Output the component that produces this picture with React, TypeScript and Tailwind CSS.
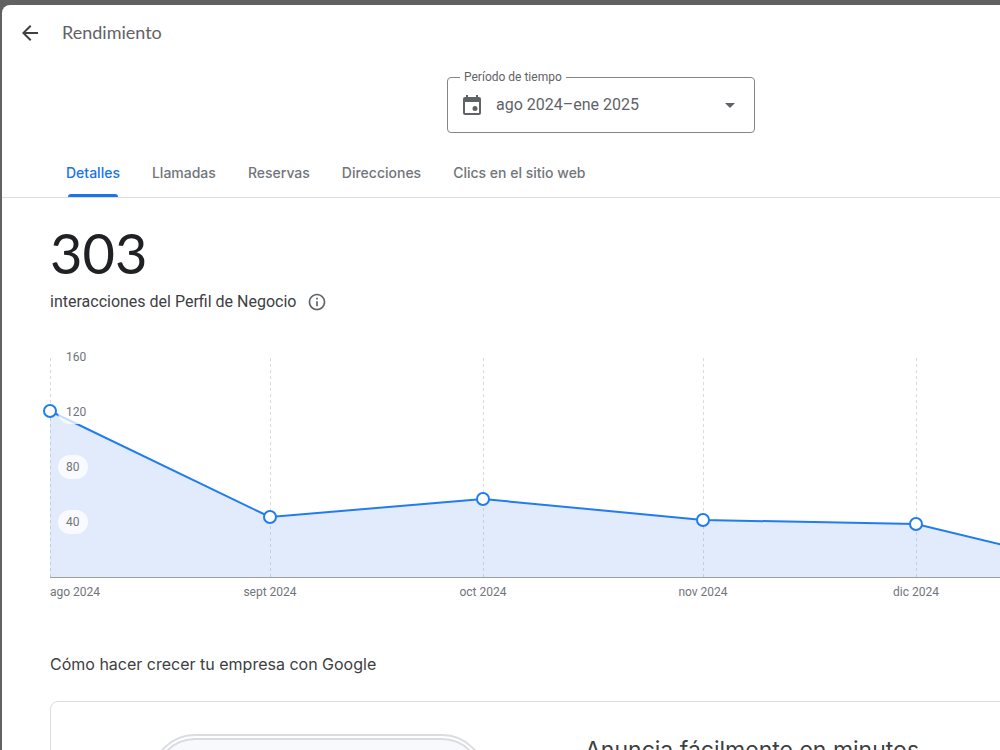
import { useState } from "react";
import { MdArrowBack, MdArrowDropDown, MdInfoOutline } from "react-icons/md";

const tabs = ["Detalles", "Llamadas", "Reservas", "Direcciones", "Clics en el sitio web"];

const points = [
  { label: "ago 2024", day: 0, value: 121 },
  { label: "sept 2024", day: 31, value: 44 },
  { label: "oct 2024", day: 61, value: 57 },
  { label: "nov 2024", day: 92, value: 42 },
  { label: "dic 2024", day: 122, value: 39 },
  { label: "ene 2025", day: 153, value: 0 },
];

const ticks = [160, 120, 80, 40];

const LEFT = 8;
const BASE = 228;
const px = (day: number) => LEFT + Math.round(day * 7.1);
const py = (value: number) => BASE - Math.floor(value * 1.375);

function CalendarIcon() {
  return (
    <svg viewBox="0 0 24 24" className="size-6 shrink-0" fill="#5f6368" aria-hidden="true">
      <path d="M19 4h-1V2h-2v2H8V2H6v2H5a2 2 0 0 0-2 2v14a2 2 0 0 0 2 2h14a2 2 0 0 0 2-2V6a2 2 0 0 0-2-2zm0 16H5V9h14v11z" />
      <circle cx="15" cy="15.500" r="2.500" />
    </svg>
  );
}

function Chart() {
  const line = points.map((p) => `${px(p.day)},${py(p.value)}`).join(" ");
  const last = px(points[points.length - 1].day);

  return (
    <svg
      width="1120"
      height="256"
      className="-ml-2 block font-['Roboto',sans-serif] text-xs"
      role="img"
      aria-label="Interacciones por mes"
    >
      <polygon points={`${LEFT},${BASE} ${line} ${last},${BASE}`} fill="#e2ebfc" />
      {points.map((p) => (
        <path
          key={p.label}
          d={`M${px(p.day) + 0.5} 9V${BASE}`}
          stroke="#80868b"
          strokeOpacity="0.3"
          strokeDasharray="3 3"
        />
      ))}
      <path d={`M${LEFT} ${BASE + 0.5}H${last}`} stroke="#9aa0a6" />
      <polyline points={line} fill="none" stroke="#217cee" strokeWidth="2" />

      {ticks.map((t) => (
        <g key={t}>
          <rect
            x="16"
            y={py(t) - 12}
            width={t < 100 ? 30 : 37}
            height="24"
            rx="12"
            fill="#fff"
            fillOpacity="0.75"
          />
          <text x="24" y={py(t) + 4} fill="#70757a">
            {t}
          </text>
        </g>
      ))}

      {points.map((p, i) => (
        <g key={p.label}>
          <circle cx={px(p.day)} cy={py(p.value)} r="6" fill="#fff" stroke="#217cee" strokeWidth="2" />
          <text x={px(p.day)} y="247" fill="#70757a" textAnchor={i === 0 ? "start" : "middle"}>
            {p.label}
          </text>
        </g>
      ))}
    </svg>
  );
}

export default function App() {
  const [active, setActive] = useState(tabs[0]);

  return (
    <div className="h-screen overflow-hidden bg-[#616161] pt-[5px] pl-[2px] font-['Roboto',sans-serif] text-[#3c4043]">
      {/* The panel is wider than a small window and runs off its right edge */}
      <main className="min-h-full min-w-[1198px] rounded-tl-lg bg-white">
        <header className="flex h-14 items-center gap-5 pl-4">
          <button type="button" aria-label="Atrás" className="flex size-6 items-center justify-center">
            <MdArrowBack className="size-6" />
          </button>
          <h1 className="pb-[2px] font-['Lato',sans-serif] text-lg leading-6 text-[#5f6368]">
            Rendimiento
          </h1>
        </header>

        <div className="flex justify-center pt-2">
          <fieldset className="h-16 w-[308px] rounded border border-[#80868b] px-3">
            <legend className="px-1 text-xs leading-4 text-[#5f6368]">
              <label htmlFor="period">Período de tiempo</label>
            </legend>
            <div className="flex h-10 items-center gap-3">
              <CalendarIcon />
              <select
                id="period"
                className="min-w-0 flex-1 appearance-none bg-transparent text-base text-[#5f6368] outline-none"
              >
                <option>ago 2024–ene 2025</option>
              </select>
              <MdArrowDropDown className="size-6 shrink-0 text-[#5f6368]" />
            </div>
          </fieldset>
        </div>

        <nav className="mt-4 flex h-[49px] border-b border-[#dadce0] pl-12">
          {tabs.map((tab) => (
            <button
              key={tab}
              type="button"
              onClick={() => setActive(tab)}
              className={`relative px-4 font-['Inter',sans-serif] text-sm font-medium ${
                active === tab ? "text-[#1a73e8]" : "text-[#70757a]"
              }`}
            >
              {tab}
              {active === tab && (
                <span className="absolute inset-x-[18px] bottom-0 h-[3px] rounded-t-[3px] bg-[#1a73e8]" />
              )}
            </button>
          ))}
        </nav>

        <section className="px-12 pt-6">
          <p className="font-['Lato',sans-serif] text-[56px] leading-[62px] text-[#202124]">303</p>
          <div className="mt-[6px] flex items-center gap-[11px]">
            <p className="text-base leading-6">interacciones del Perfil de Negocio</p>
            <button type="button" aria-label="Más información" className="text-[#5f6368]">
              <MdInfoOutline className="size-5" />
            </button>
          </div>

          <div className="mt-[35px]">
            <Chart />
          </div>

          <h2 className="mt-[47px] font-['Inter',sans-serif] text-base leading-6">
            Cómo hacer crecer tu empresa con Google
          </h2>

          <article className="mt-[25px] flex h-80 items-start rounded-lg border border-[#dadce0]">
            <div className="mt-8 ml-[100px] h-72 w-[335px] shrink-0 rounded-[44px] border-2 border-[#dadce0] p-[2px]">
              <div className="h-full rounded-[40px] border-2 border-[#dadce0] bg-[#f8f9fc]" />
            </div>
            <h3 className="mt-8 ml-[99px] font-['Inter',sans-serif] text-[23px] leading-8">
              Anuncia fácilmente en minutos
            </h3>
          </article>
        </section>
      </main>
    </div>
  );
}
